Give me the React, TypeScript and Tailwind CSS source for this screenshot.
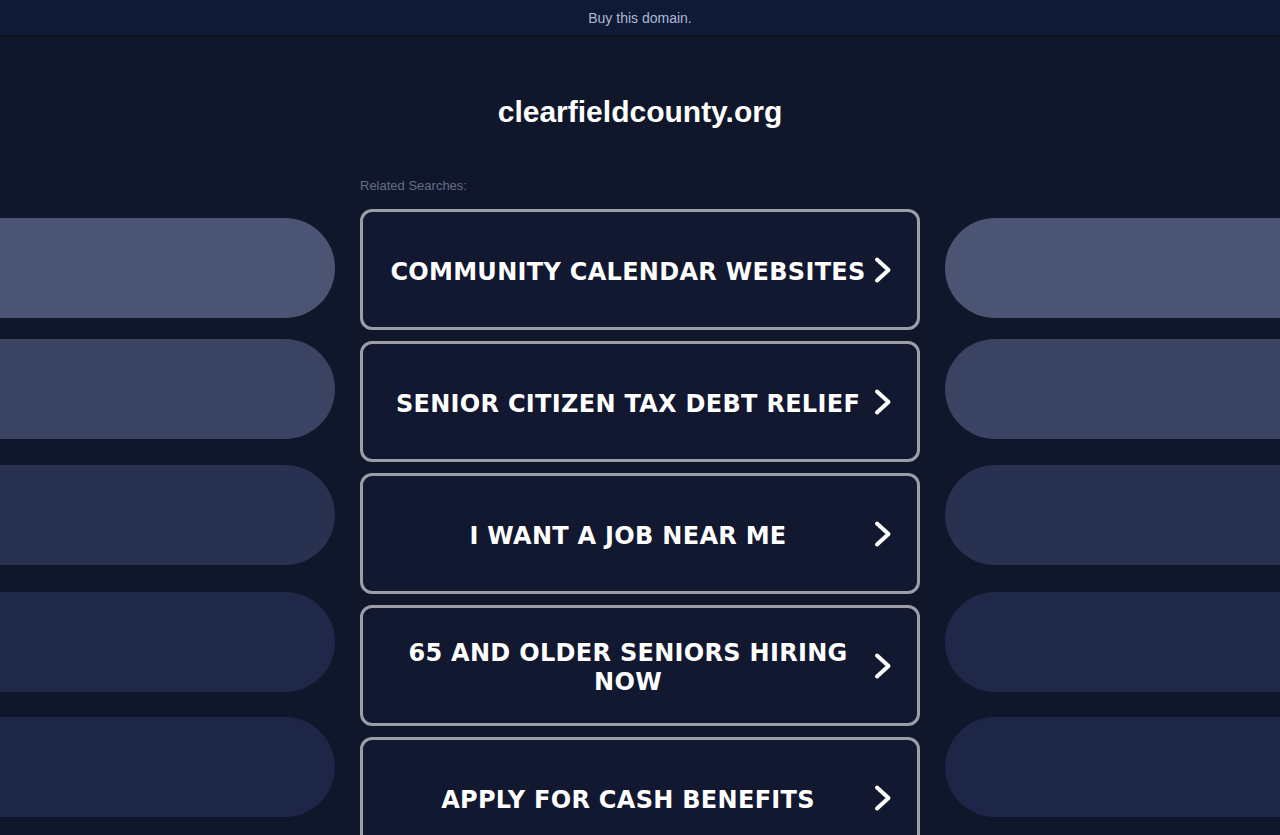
const searches = [
  'COMMUNITY CALENDAR WEBSITES',
  'SENIOR CITIZEN TAX DEBT RELIEF',
  'I WANT A JOB NEAR ME',
  '65 AND OLDER SENIORS HIRING NOW',
  'APPLY FOR CASH BENEFITS',
];

// side decoration pills, fading darker toward the bottom
const pills = [
  { bg: 'bg-[#4b5573]', mt: 'mt-0' },
  { bg: 'bg-[#3a4361]', mt: 'mt-[21px]' },
  { bg: 'bg-[#293150]', mt: 'mt-[26px]' },
  { bg: 'bg-[#1f2848]', mt: 'mt-[27px]' },
  { bg: 'bg-[#1d2646]', mt: 'mt-[25px]' },
];

function Chevron() {
  return (
    <svg width="20" height="28" viewBox="0 0 20 28" fill="none">
      <path d="M4 3.5 L15.5 14 L4 24.5" stroke="white" strokeWidth="4" strokeLinecap="round" strokeLinejoin="round" />
    </svg>
  );
}

function SideColumn({ side }: { side: 'left' | 'right' }) {
  return (
    <div className="flex flex-col pt-[183px]">
      {pills.map((p, i) => (
        <div
          key={i}
          className={`h-[100px] ${p.bg} ${p.mt} ${side === 'left' ? 'rounded-r-[50px]' : 'rounded-l-[50px]'}`}
        />
      ))}
    </div>
  );
}

export default function App() {
  return (
    <div className="min-h-screen bg-[#11172b] font-['Liberation_Sans',Arial,sans-serif] overflow-hidden">
      {/* Top bar */}
      <div className="h-[35px] bg-[#0f1a37] flex items-center justify-center pt-[2px] shadow-[0_2px_4px_rgba(0,0,0,0.25)] relative z-10">
        <span className="text-[14px] text-[#aeb9d4]">Buy this domain.</span>
      </div>

      <div className="grid grid-cols-[335px_560px_335px] gap-x-[25px]">
        <SideColumn side="left" />

        {/* Center */}
        <div className="flex flex-col">
          <h1 className="mt-[59px] h-[36px] leading-[36px] text-center text-[30px] font-bold text-white">
            clearfieldcounty.org
          </h1>
          <p className="mt-[47px] h-[18px] leading-[18px] text-[13px] text-[#646d8a]">Related Searches:</p>
          <div className="mt-[14px] flex flex-col gap-[11px]">
            {searches.map((s) => (
              <a
                key={s}
                href="#"
                className="h-[121px] shrink-0 rounded-[12px] border-[3px] border-[#9b9ea6] bg-[#121830] flex items-center pl-[20px] pr-[24px]"
              >
                <span className="flex-1 mt-[5px] text-center text-white font-bold text-[24px] leading-[29px] tracking-[0.3px] font-['DejaVu_Sans',Verdana,sans-serif]">
                  {s}
                </span>
                <Chevron />
              </a>
            ))}
          </div>
        </div>

        <SideColumn side="right" />
      </div>
    </div>
  );
}
